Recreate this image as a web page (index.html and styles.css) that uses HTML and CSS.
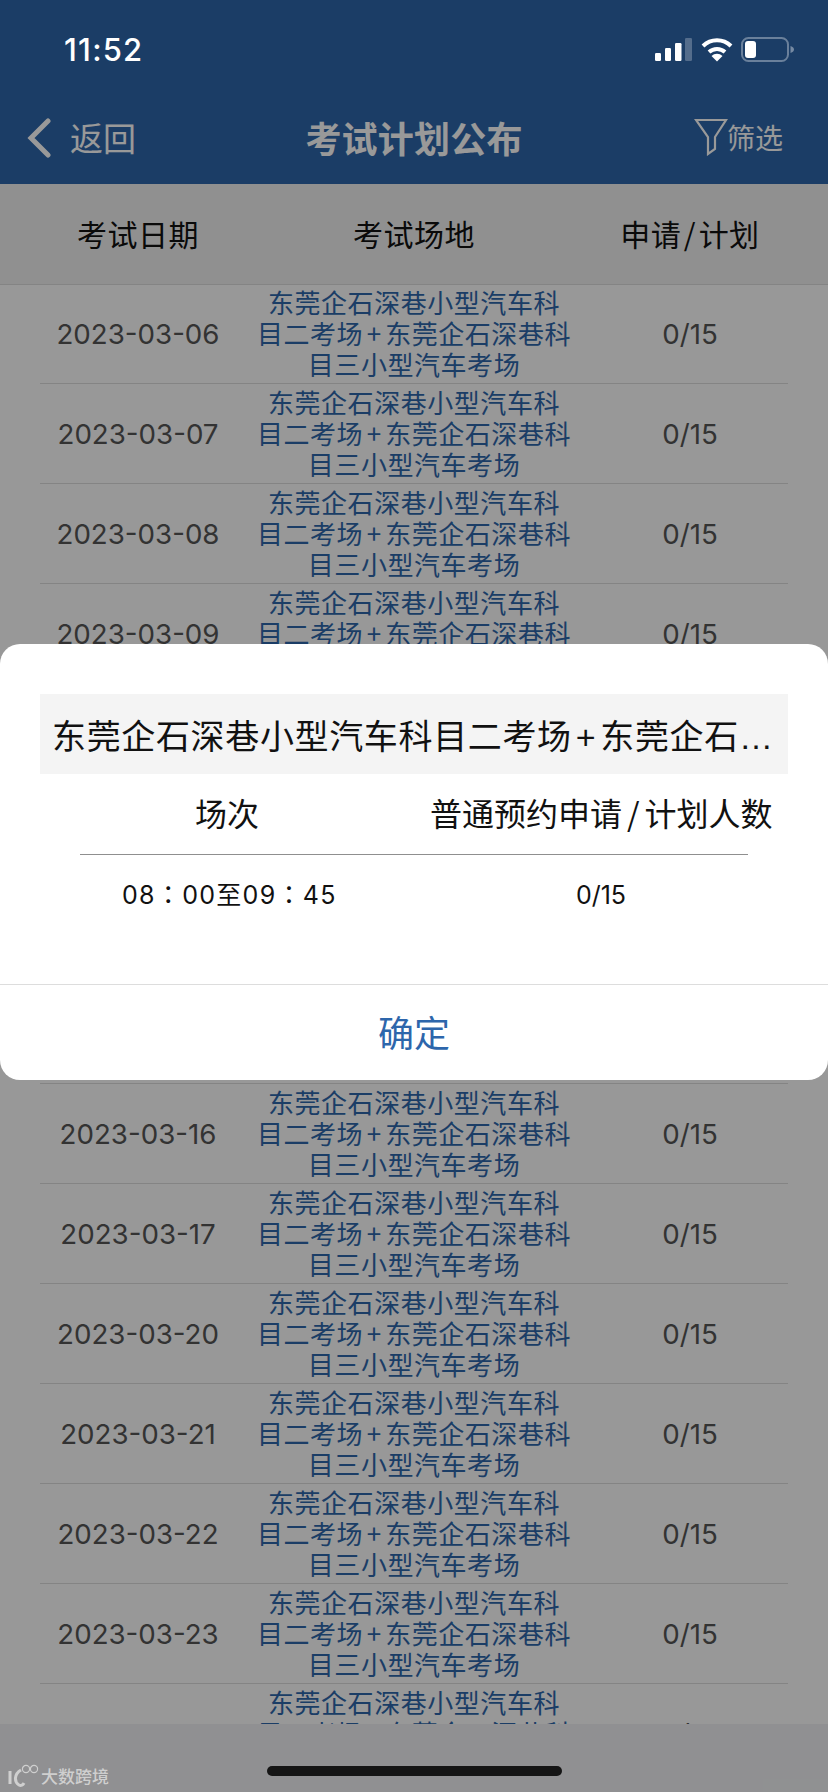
FILE: index.html
```html
<!DOCTYPE html>
<html lang="zh-CN">
<head>
<meta charset="utf-8">
<title>考试计划公布</title>
<link rel="stylesheet" href="styles.css">
</head>
<body>
<div class="screen">
  <header class="topbar">
    <div class="nav">
      <div class="nav-side nav-back">
        <svg class="back-icon" width="24" height="40" viewBox="0 0 24 40"><path d="M21 3 L4 20 L21 37" fill="none" stroke="currentColor" stroke-width="5" stroke-linecap="round"/></svg>
        <span>返回</span>
      </div>
      <div class="nav-title">考试计划公布</div>
      <div class="nav-side nav-filter">
        <svg class="filter-icon" width="34" height="38" viewBox="0 0 34 38"><path d="M2 2 H32 L21 19 V31 L14 36 V19 Z" fill="none" stroke="currentColor" stroke-width="2.2" stroke-linejoin="miter"/></svg>
        <span>筛选</span>
      </div>
    </div>
  </header>
  <div class="table-head">
    <div>考试日期</div><div>考试场地</div><div>申请<span class="slash">/</span>计划</div>
  </div>
  <main class="rows">
    <div class="row"><div class="date">2023-03-06</div><div class="place">东莞企石深巷小型汽车科<br>目二考场<span class="plus">+</span>东莞企石深巷科<br>目三小型汽车考场</div><div class="count">0/15</div></div>
    <div class="row"><div class="date">2023-03-07</div><div class="place">东莞企石深巷小型汽车科<br>目二考场<span class="plus">+</span>东莞企石深巷科<br>目三小型汽车考场</div><div class="count">0/15</div></div>
    <div class="row"><div class="date">2023-03-08</div><div class="place">东莞企石深巷小型汽车科<br>目二考场<span class="plus">+</span>东莞企石深巷科<br>目三小型汽车考场</div><div class="count">0/15</div></div>
    <div class="row"><div class="date">2023-03-09</div><div class="place">东莞企石深巷小型汽车科<br>目二考场<span class="plus">+</span>东莞企石深巷科<br>目三小型汽车考场</div><div class="count">0/15</div></div>
    <div class="row"><div class="date">2023-03-10</div><div class="place">东莞企石深巷小型汽车科<br>目二考场<span class="plus">+</span>东莞企石深巷科<br>目三小型汽车考场</div><div class="count">0/15</div></div>
    <div class="row"><div class="date">2023-03-13</div><div class="place">东莞企石深巷小型汽车科<br>目二考场<span class="plus">+</span>东莞企石深巷科<br>目三小型汽车考场</div><div class="count">0/15</div></div>
    <div class="row"><div class="date">2023-03-14</div><div class="place">东莞企石深巷小型汽车科<br>目二考场<span class="plus">+</span>东莞企石深巷科<br>目三小型汽车考场</div><div class="count">0/15</div></div>
    <div class="row"><div class="date">2023-03-15</div><div class="place">东莞企石深巷小型汽车科<br>目二考场<span class="plus">+</span>东莞企石深巷科<br>目三小型汽车考场</div><div class="count">0/15</div></div>
    <div class="row"><div class="date">2023-03-16</div><div class="place">东莞企石深巷小型汽车科<br>目二考场<span class="plus">+</span>东莞企石深巷科<br>目三小型汽车考场</div><div class="count">0/15</div></div>
    <div class="row"><div class="date">2023-03-17</div><div class="place">东莞企石深巷小型汽车科<br>目二考场<span class="plus">+</span>东莞企石深巷科<br>目三小型汽车考场</div><div class="count">0/15</div></div>
    <div class="row"><div class="date">2023-03-20</div><div class="place">东莞企石深巷小型汽车科<br>目二考场<span class="plus">+</span>东莞企石深巷科<br>目三小型汽车考场</div><div class="count">0/15</div></div>
    <div class="row"><div class="date">2023-03-21</div><div class="place">东莞企石深巷小型汽车科<br>目二考场<span class="plus">+</span>东莞企石深巷科<br>目三小型汽车考场</div><div class="count">0/15</div></div>
    <div class="row"><div class="date">2023-03-22</div><div class="place">东莞企石深巷小型汽车科<br>目二考场<span class="plus">+</span>东莞企石深巷科<br>目三小型汽车考场</div><div class="count">0/15</div></div>
    <div class="row"><div class="date">2023-03-23</div><div class="place">东莞企石深巷小型汽车科<br>目二考场<span class="plus">+</span>东莞企石深巷科<br>目三小型汽车考场</div><div class="count">0/15</div></div>
    <div class="row"><div class="date">2023-03-24</div><div class="place">东莞企石深巷小型汽车科<br>目二考场<span class="plus">+</span>东莞企石深巷科<br>目三小型汽车考场</div><div class="count">0/15</div></div>
  </main>
  <div class="bottom-band"></div>

  <div class="status">
    <span class="time">11:52</span>
    <div class="status-icons">
      <svg width="38" height="24" viewBox="0 0 38 24"><rect x="0" y="15" width="6" height="8" rx="1.2" fill="#fff"/><rect x="10" y="10" width="6" height="13" rx="1.2" fill="#fff"/><rect x="20" y="5" width="6.500" height="18" rx="1.2" fill="#fff"/><rect x="30" y="0" width="7" height="23" rx="1.2" fill="#fff" fill-opacity=".25"/></svg>
      <svg width="32" height="24" viewBox="0 0 32 24"><path d="M2 8 A20 20 0 0 1 30 8" fill="none" stroke="#fff" stroke-width="4"/><path d="M8 14 A12 12 0 0 1 24 14" fill="none" stroke="#fff" stroke-width="4"/><path d="M16 23.500 L10.500 18 A8 8 0 0 1 21.500 18 Z" fill="#fff"/></svg>
      <svg width="54" height="26" viewBox="0 0 54 26"><rect x="1" y="1" width="46" height="23" rx="6.500" fill="none" stroke="#fff" stroke-opacity=".35" stroke-width="2"/><rect x="4" y="4" width="11" height="17" rx="3" fill="#fff"/><path d="M49.500 9 C52 10 53 11 53 12.500 C53 14 52 15 49.500 16 Z" fill="#fff" fill-opacity=".4"/></svg>
    </div>
  </div>

  <div class="mask"></div>

  <section class="dialog">
    <div class="dialog-title"><span>东莞企石深巷小型汽车科目二考场<span class="plus-wide">+</span>东莞企石深巷科目三小型汽车考场</span></div>
    <div class="dialog-head"><div>场次</div><div>普通预约申请<span class="slash-wide">/</span>计划人数</div></div>
    <div class="dialog-line"></div>
    <div class="dialog-row"><div class="slot" lang="zh-TW">08：00至09：45</div><div>0/15</div></div>
    <div class="dialog-btn">确定</div>
  </section>

  <div class="mark">
    <svg width="31" height="24" viewBox="0 0 31 24"><path d="M2 7 V20 M13 6 C6 10 6 18 11 21 C13 22 15 21 16 19" fill="none" stroke="#cfcfcf" stroke-width="3"/><circle cx="18" cy="5" r="3.600" fill="none" stroke="#cfcfcf" stroke-width="1.200"/><circle cx="26" cy="5" r="3.600" fill="none" stroke="#cfcfcf" stroke-width="1.200"/></svg>
    <span>大数跨境</span>
  </div>

  <div class="home"></div>
</div>
</body>
</html>
```
FILE: styles.css
```css
* { box-sizing: border-box; }
html, body { margin: 0; padding: 0; }
body { width: 828px; height: 1792px; overflow: hidden; font-family: "Noto Sans CJK SC", "Liberation Sans", sans-serif; background: #f0f0f0; }
.screen { position: relative; width: 828px; height: 1792px; overflow: hidden; background: #fdfdfd; }

.topbar { height: 184px; background: #2d66ab; padding-top: 89px; }
.nav { height: 96px; display: flex; align-items: center; justify-content: space-between; padding: 0 45px 0 27px; position: relative; color: #fff; }
.nav-side { display: flex; align-items: center; font-size: 31px; }
.nav-back span { margin-left: 19px; font-size: 33px; }
.back-icon { margin-top: 2px; }
.nav-filter { font-size: 28px; }
.filter-icon { margin-right: -1px; }
.nav-title { position: absolute; left: 0; right: 0; text-align: center; font-size: 36px; font-weight: 700; letter-spacing: .2px; }

.table-head { height: 101px; padding-bottom: 2px; display: grid; grid-template-columns: repeat(3, 1fr); align-items: center; text-align: center; font-size: 30px; letter-spacing: .5px; color: #111; background: #f0f0f0; border-bottom: 1px solid #ddd; }
.slash { margin: 0 2.5px; }

.rows { margin-top: -1px; }
.row { height: 100px; margin: 0 40px; display: grid; grid-template-columns: 196px 356px 196px; align-items: center; text-align: center; border-bottom: 1px solid #ddd; }
.date, .count { font-family: "Inter", "Liberation Sans", sans-serif; font-size: 27.700px; color: #555; }
.place { font-size: 26px; line-height: 31px; padding-bottom: 2px; color: #2d66ab; letter-spacing: .55px; white-space: nowrap; }
.plus { margin: 0 3.5px; }

.bottom-band { position: absolute; left: 0; right: 0; bottom: 0; height: 68px; background: #f0f1f3; }
.mask { position: absolute; inset: 0; background: rgba(0,0,0,.4); }

.status { position: absolute; z-index: 3; left: 0; right: 0; top: 0; height: 88px; padding: 28px 33px 0 64px; display: flex; justify-content: space-between; color: #fff; }
.time { font-family: "Inter", "Liberation Sans", sans-serif; font-size: 31px; font-weight: 500; letter-spacing: 1.2px; line-height: 44px; }
.status-icons { display: flex; gap: 8px; align-items: center; height: 44px; }

.dialog { position: absolute; z-index: 2; left: 0; right: 0; top: 644px; height: 436px; background: #fff; border-radius: 20px; padding-top: 50px; }
.dialog-title { margin: 0 40px; height: 80px; background: #f4f4f4; display: flex; align-items: center; padding: 0 14px 0 12px; font-family: "Liberation Sans", "Noto Sans CJK SC", sans-serif; font-size: 34px; color: #111; letter-spacing: .65px; }
.dialog-title > span { display: block; overflow: hidden; white-space: nowrap; text-overflow: ellipsis; }
.plus-wide { margin: 0 4px; }
.dialog-head { height: 80px; padding: 0 0 4px 122px; display: grid; grid-template-columns: 210px 342px; column-gap: 98px; align-items: center; text-align: center; font-size: 32px; color: #111; white-space: nowrap; }
.slash-wide { margin: 0 5px; }
.dialog-line { height: 1px; margin: 0 80px; background: #8f8f8f; }
.dialog-row { height: 79px; padding: 0 0 0 122px; display: grid; grid-template-columns: 210px 342px; column-gap: 98px; align-items: center; text-align: center; font-family: "Inter", "Noto Sans CJK TC", sans-serif; font-size: 25px; color: #111; white-space: nowrap; }
.slot { letter-spacing: 1.3px; padding-bottom: 3px; }
.dialog-btn { margin-top: 50px; height: 96px; padding-bottom: 4px; border-top: 1px solid #ddd; display: flex; align-items: center; justify-content: center; font-size: 36px; color: #2d66ab; }

.home { position: absolute; z-index: 3; left: 267px; top: 1766px; width: 295px; height: 10px; border-radius: 5px; background: #151515; }
.mark { position: absolute; z-index: 3; left: 8px; top: 1763px; display: flex; align-items: center; gap: 2px; font-size: 17px; font-weight: 500; color: #cfcfcf; }
```
